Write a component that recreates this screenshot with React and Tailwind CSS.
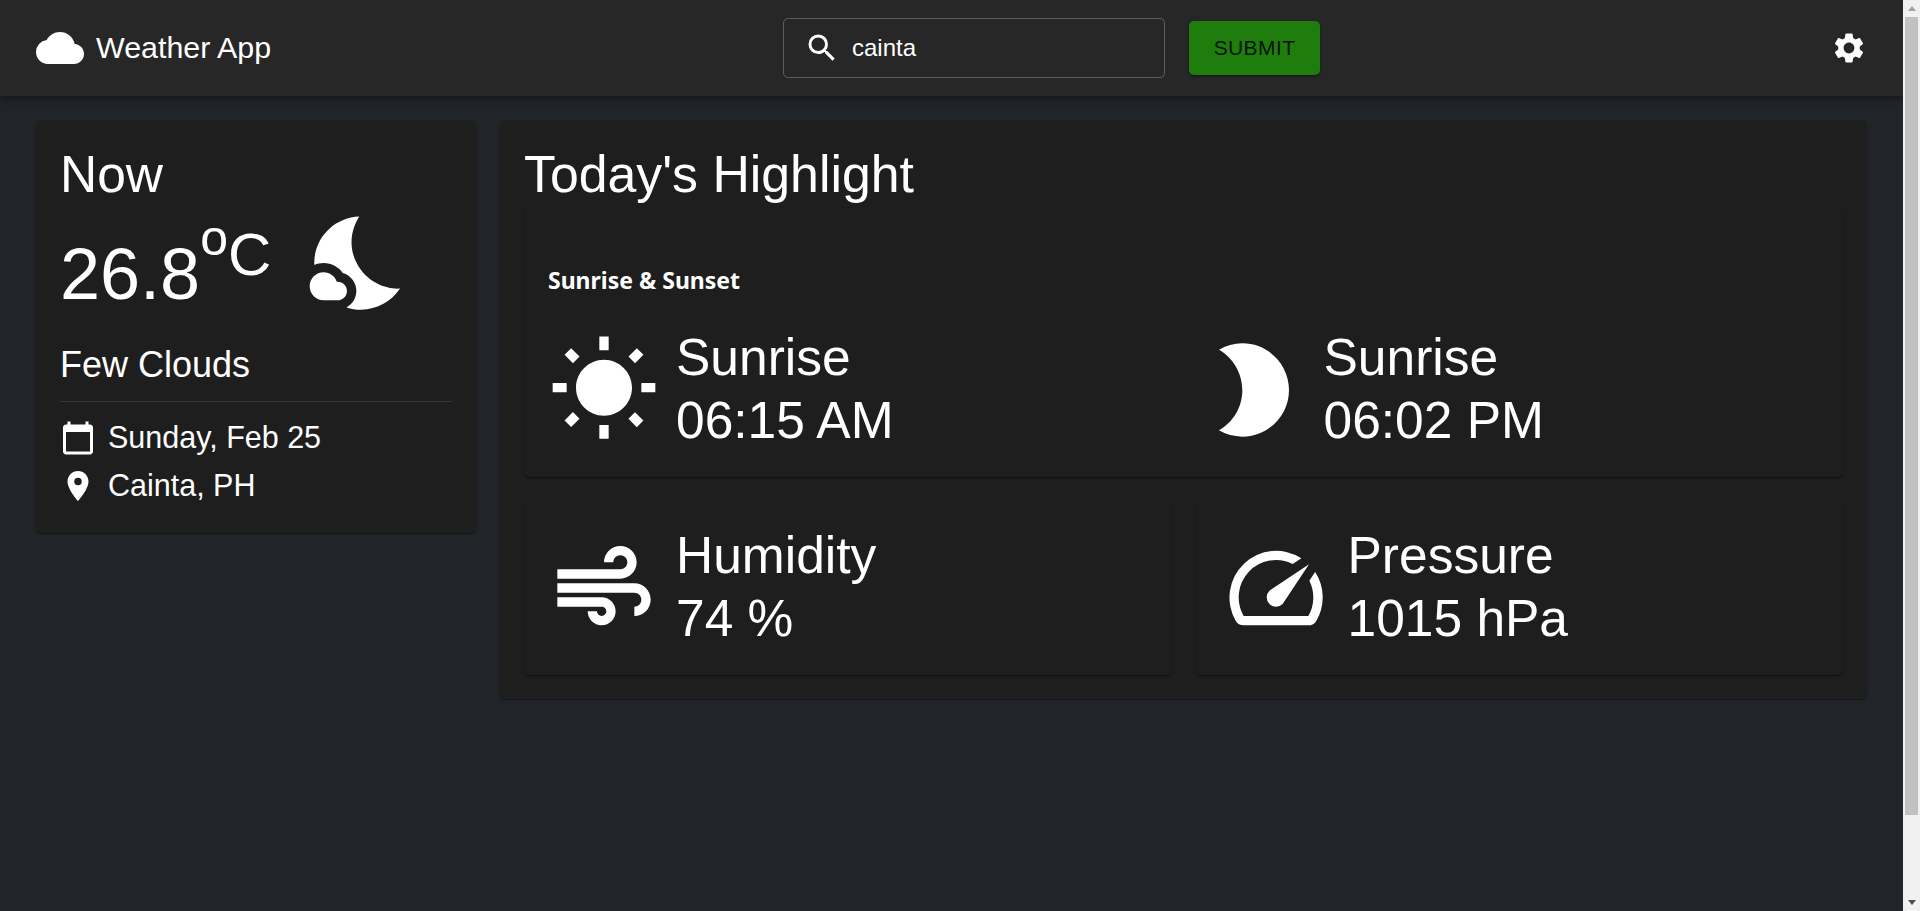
import React from 'react';
import {
  MdCloud,
  MdSearch,
  MdSettings,
  MdCalendarToday,
  MdPlace,
  MdNightsStay,
  MdWbSunny,
  MdModeNight,
  MdAir,
  MdSpeed,
} from 'react-icons/md';

const cardShadow =
  'shadow-[0_2px_1px_-1px_rgba(0,0,0,0.2),0_1px_1px_0_rgba(0,0,0,0.14),0_1px_3px_0_rgba(0,0,0,0.12)]';

function Stat({ icon, label, value }) {
  return (
    <div className="flex items-center gap-4">
      <div className="w-28 h-28 mt-[2px] shrink-0">{icon}</div>
      <div className="text-[51.5px] leading-[63px]">
        <div>{label}</div>
        <div>{value}</div>
      </div>
    </div>
  );
}

// windows style page scrollbar seen on the right edge
function Scrollbar() {
  return (
    <aside className="w-[17px] shrink-0 bg-[#f1f1f1] flex flex-col">
      <div className="h-[17px] flex items-center justify-center">
        <div className="w-0 h-0 border-x-[4.5px] border-x-transparent border-b-[5px] border-b-[#a3a3a3]" />
      </div>
      <div className="h-[798px] mx-[2px] bg-[#c1c1c1]" />
      <div className="mt-auto h-[17px] flex items-center justify-center">
        <div className="w-0 h-0 border-x-[4.5px] border-x-transparent border-t-[5px] border-t-[#505050]" />
      </div>
    </aside>
  );
}

export default function App() {
  return (
    <div className="flex h-screen overflow-hidden bg-[#212529] text-white font-['Liberation_Sans',Arial,sans-serif]">
      <div className="flex-1 min-w-0">
        <header className="h-24 bg-[#272727] flex items-center pl-9 pr-6 shadow-[0_2px_4px_-1px_rgba(0,0,0,0.2),0_4px_5px_0_rgba(0,0,0,0.14),0_1px_10px_0_rgba(0,0,0,0.12)]">
          <div className="flex items-center gap-3 w-[747px]">
            <MdCloud size={48} />
            <span className="text-[30.4px] leading-none pb-[2px]">Weather App</span>
          </div>
          <div className="h-[60px] w-[382px] border border-white/25 rounded-[5px] flex items-center pl-5 gap-3">
            <MdSearch size={36} />
            <span className="text-[24px]">cainta</span>
          </div>
          <button className="ml-6 h-[54px] w-[131px] rounded-[5px] bg-[#1e7d0c] text-black/85 text-[21px] tracking-[0.4px] shadow-[0_3px_1px_-2px_rgba(0,0,0,0.2),0_2px_2px_0_rgba(0,0,0,0.14),0_1px_5px_0_rgba(0,0,0,0.12)]">
            SUBMIT
          </button>
          <button className="ml-auto w-[60px] h-[60px] flex items-center justify-center">
            <MdSettings size={36} />
          </button>
        </header>

        <main className="grid grid-cols-[440px_1fr] gap-6 px-9 pt-6 items-start">
          <section className={`bg-[#1e1e1e] rounded-[5px] px-6 pt-6 pb-[23px] ${cardShadow}`}>
            <h2 className="text-[51.5px] leading-[60px]">Now</h2>
            <div className="flex h-28 mt-[3px]">
              <div className="w-[245px] text-[72px] leading-[134px]">
                26.8
                <span className="text-[50px] leading-none align-[44px]">o</span>
                <span className="text-[60px] leading-none align-[24px]">C</span>
              </div>
              <MdNightsStay size={112} />
            </div>
            <p className="text-[36px] leading-[50px] mt-[21px]">Few Clouds</p>
            <hr className="border-white/10 mt-[11px] mb-3" />
            <div className="flex items-center gap-3 h-12 text-[30.5px]">
              <MdCalendarToday size={36} />
              <span>Sunday, Feb 25</span>
            </div>
            <div className="flex items-center gap-3 h-12 text-[30.5px]">
              <MdPlace size={36} />
              <span>Cainta, PH</span>
            </div>
          </section>

          <section className={`bg-[#1e1e1e] rounded-[5px] p-6 ${cardShadow}`}>
            <h2 className="text-[51.8px] leading-[60px]">Today's Highlight</h2>
            <div className={`mt-1 bg-[#1e1e1e] rounded-[5px] px-6 pt-14 pb-[25px] ${cardShadow}`}>
              <h3 className="text-[23px] font-bold font-['Noto_Sans',sans-serif] leading-8">Sunrise &amp; Sunset</h3>
              <div className="grid grid-cols-2 gap-6 mt-[30px]">
                <Stat icon={<MdWbSunny size={112} />} label="Sunrise" value="06:15 AM" />
                <Stat icon={<MdModeNight size={112} className="ml-[2px]" />} label="Sunrise" value="06:02 PM" />
              </div>
            </div>
            <div className="grid grid-cols-2 gap-6 mt-6">
              <div className={`bg-[#1e1e1e] rounded-[5px] px-6 pt-[23px] pb-[25px] ${cardShadow}`}>
                <Stat icon={<MdAir size={112} />} label="Humidity" value="74 %" />
              </div>
              <div className={`bg-[#1e1e1e] rounded-[5px] px-6 pt-[23px] pb-[25px] ${cardShadow}`}>
                <Stat icon={<MdSpeed size={112} />} label="Pressure" value="1015 hPa" />
              </div>
            </div>
          </section>
        </main>
      </div>
      <Scrollbar />
    </div>
  );
}
